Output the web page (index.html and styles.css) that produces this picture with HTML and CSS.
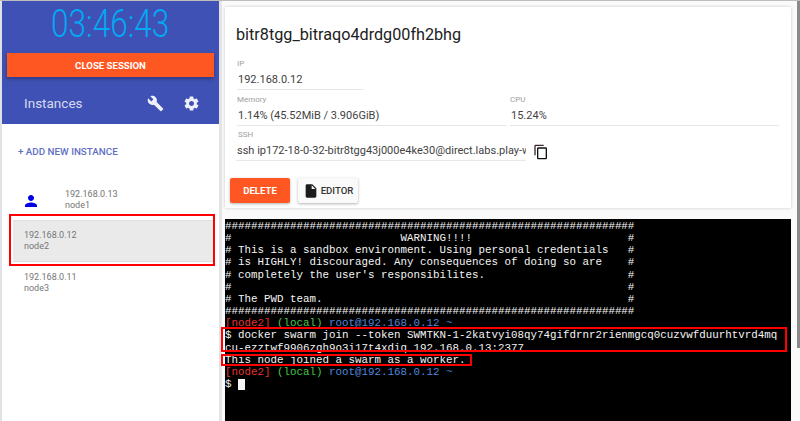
FILE: index.html
```html
<!DOCTYPE html>
<html lang="en">
<head>
<meta charset="utf-8">
<title>Play with Docker</title>
<link rel="stylesheet" href="styles.css">
</head>
<body>
<div class="page">
  <aside class="sidebar">
    <header class="side-head">
      <div class="clock"><span class="clock-text">03:46:43</span></div>
      <button class="close-btn">CLOSE SESSION</button>
      <div class="toolbar">
        <span class="toolbar-title">Instances</span>
        <svg class="tool-icon wrench" viewBox="0 0 24 24"><path d="M22.7 19l-9.1-9.1c.9-2.3.4-5-1.5-6.9-2-2-5-2.4-7.4-1.3L9 6 6 9 1.600 4.700C.4 7.100.9 10.100 2.900 12.100c1.900 1.900 4.600 2.400 6.900 1.500l9.100 9.100c.4.400 1 .4 1.400 0l2.300-2.300c.5-.4.5-1.100.1-1.400z"/></svg>
        <svg class="tool-icon gear" viewBox="0 0 24 24"><path d="M19.430 12.980c.04-.32.07-.64.07-.98s-.03-.66-.07-.98l2.110-1.650c.19-.15.24-.42.12-.64l-2-3.460c-.12-.22-.39-.3-.61-.22l-2.490 1c-.52-.4-1.080-.73-1.690-.98l-.38-2.650C14.460 2.180 14.250 2 14 2h-4c-.25 0-.46.18-.49.42l-.38 2.650c-.61.25-1.170.59-1.690.98l-2.490-1c-.23-.09-.49 0-.61.22l-2 3.460c-.13.22-.07.49.12.64l2.110 1.650c-.04.32-.07.65-.07.98s.03.66.07.98l-2.110 1.650c-.19.15-.24.42-.12.64l2 3.460c.12.22.39.3.61.22l2.490-1c.52.4 1.080.73 1.690.98l.38 2.650c.03.24.24.42.49.42h4c.25 0 .46-.18.49-.42l.38-2.650c.61-.25 1.170-.59 1.690-.98l2.490 1c.23.09.49 0 .61-.22l2-3.460c.12-.22.07-.49-.12-.64l-2.110-1.650zM12 15.500c-1.930 0-3.500-1.570-3.500-3.500s1.570-3.500 3.500-3.500 3.500 1.570 3.500 3.500-1.570 3.500-3.500 3.500z"/></svg>
      </div>
    </header>
    <div class="add-row">+ ADD NEW INSTANCE</div>
    <ul class="instances">
      <li class="instance is-manager">
        <svg class="person" viewBox="0 0 24 24"><path d="M12 12c2.210 0 4-1.790 4-4s-1.790-4-4-4-4 1.790-4 4 1.790 4 4 4zm0 2c-2.670 0-8 1.340-8 4v2h16v-2c0-2.660-5.330-4-8-4z"/></svg>
        <div class="instance-text"><div>192.168.0.13</div><div>node1</div></div>
      </li>
      <li class="instance is-selected">
        <div class="instance-text"><div>192.168.0.12</div><div>node2</div></div>
      </li>
      <li class="instance">
        <div class="instance-text"><div>192.168.0.11</div><div>node3</div></div>
      </li>
    </ul>
    <div class="mark mark-node"></div>
  </aside>
  <main class="main">
    <section class="card">
      <h1 class="title">bitr8tgg_bitraqo4drdg00fh2bhg</h1>
      <div class="field field-ip">
        <label class="label">IP</label>
        <div class="value">192.168.0.12</div>
      </div>
      <div class="stats">
        <div class="field">
          <label class="label">Memory</label>
          <div class="value">1.14% (45.52MiB / 3.906GiB)</div>
        </div>
        <div class="field">
          <label class="label">CPU</label>
          <div class="value">15.24%</div>
        </div>
      </div>
      <div class="ssh-row">
        <div class="field field-ssh">
          <label class="label">SSH</label>
          <div class="value value-clip">ssh ip172-18-0-32-bitr8tgg43j000e4ke30@direct.labs.play-with-docker.com</div>
        </div>
        <svg class="copy" viewBox="0 0 24 24"><path class="copy-back" d="M16 1H4c-1.100 0-2 .9-2 2v14h2V3h12V1z"/><path d="M19 5H8c-1.100 0-2 .9-2 2v14c0 1.100.9 2 2 2h11c1.100 0 2-.9 2-2V7c0-1.100-.9-2-2-2zm0 16H8V7h11v14z"/></svg>
      </div>
      <div class="actions">
        <button class="btn btn-delete">DELETE</button>
        <button class="btn btn-editor">
          <svg class="file" viewBox="0 0 24 24"><path d="M6 2c-1.100 0-2 .9-2 2v16c0 1.100.9 2 2 2h12c1.100 0 2-.9 2-2V8l-6-6H6zm7 7V3.500L18.500 9H13z"/></svg>
          EDITOR
        </button>
      </div>
    </section>
    <section class="terminal">
<pre class="term-text">###############################################################
#                          WARNING!!!!                        #
# This is a sandbox environment. Using personal credentials   #
# is HIGHLY! discouraged. Any consequences of doing so are    #
# completely the user's responsibilites.                      #
#                                                             #
# The PWD team.                                               #
###############################################################
<span class="t-red">[node2]</span> <span class="t-green">(local)</span> <span class="t-blue">root@192.168.0.12</span> <span class="t-blue">~</span>
$ docker swarm join --token SWMTKN-1-2katvyi08qy74gifdrnr2rienmgcq0cuzvwfduurhtvrd4mq
cu-ezztwf9906zgh9o3i17t4xdiq 192.168.0.13:2377
This node joined a swarm as a worker.
<span class="t-red">[node2]</span> <span class="t-green">(local)</span> <span class="t-blue">root@192.168.0.12</span> <span class="t-blue">~</span>
$ <span class="cursor"> </span></pre>
      <div class="mark mark-cmd"></div>
      <div class="mark mark-out"></div>
    </section>
  </main>
  <div class="scrollbar"></div>
</div>
</body>
</html>
```
FILE: styles.css
```css
* { box-sizing: border-box; }
html, body { margin: 0; height: 100%; overflow: hidden; }
body { font-family: Roboto, "Liberation Sans", sans-serif; background: #fafafa; }

.page {
  position: relative;
  width: 800px;
  height: 421px;
  display: flex;
  padding-left: 2px;
  border-top: 1px solid #bdbdbd;
  background: #dfe3e8;
  overflow: hidden;
}

/* Sidebar */
.sidebar {
  position: relative;
  width: 217px;
  flex: none;
  background: #fff;
}
.side-head {
  height: 123px;
  background: #3f51b5;
  padding: 0 5px;
}
.clock {
  height: 52px;
  display: flex;
  justify-content: center;
  padding-top: 3px;
}
.clock-text {
  font-family: Roboto, sans-serif;
  font-weight: 300;
  font-size: 38px;
  line-height: 40px;
  color: #03a9f4;
  display: inline-block;
  transform: scaleX(0.83);
}
.close-btn {
  display: block;
  width: 207px;
  height: 24px;
  border: 0;
  padding: 0;
  background: #ff5722;
  color: #fff;
  font: 700 9.600px Roboto, sans-serif;
  box-shadow: 0 2px 4px rgba(0,0,0,.3);
}
.toolbar {
  display: flex;
  align-items: center;
  height: 28px;
  margin-top: 12px;
  padding-left: 17px;
}
.toolbar-title {
  font-size: 13.500px;
  color: #d5daf0;
  width: 123px;
}
.tool-icon { fill: #eef0fa; flex: none; }
.wrench { width: 17px; height: 17px; }
.gear { width: 17px; height: 17px; margin-left: 19px; }

.add-row {
  margin: 22px 0 0 16px;
  font-size: 9.800px;
  line-height: 12px;
  font-weight: 500;
  color: #5f6fc4;
}
.instances {
  list-style: none;
  margin: 21px 0 0;
  padding: 0;
  font-size: 9px;
  line-height: 11px;
  color: #757575;
}
.instance {
  display: flex;
  align-items: center;
  height: 41px;
  margin: 0 6px 0 11px;
  padding-left: 11px;
}
.is-manager .instance-text { padding-left: 21px; }
.person { width: 18px; height: 18px; fill: #0000e6; margin: 3px 4px 0 -2px; }
.is-selected {
  background: #eaeaea;
  border-top: 1px solid #e0e0e0;
  border-bottom: 1px solid #dcdcdc;
  height: 42px;
}

/* Main */
.main {
  flex: 1;
  min-width: 0;
  background: #fafafa;
  border-left: 3px solid #e4e4e4;
  padding: 6px 6px 0 3px;
}
.card {
  height: 201px;
  width: 566px;
  background: #fff;
  box-shadow: 0 0 3px rgba(0,0,0,.2);
  padding: 0 12px 0 11px;
}
.title {
  margin: 0;
  padding-top: 17px;
  height: 52px;
  font-size: 16.200px;
  line-height: 21px;
  font-weight: 400;
  color: #212121;
}
.label {
  display: block;
  font-size: 8px;
  line-height: 10px;
  color: #9e9e9e;
}
.value {
  font-size: 11px;
  line-height: 14px;
  color: #424242;
  padding: 0 0 2px 1px;
  border-bottom: 1px solid #e8e8e8;
  margin-top: 4px;
}
.field { min-width: 0; }
.field-ip { width: 127px; margin-left: 1px; }
.stats {
  display: grid;
  grid-template-columns: 270px 269px;
  gap: 3px;
  margin: 4.500px 0 0 1px;
}
.ssh-row {
  display: flex;
  align-items: flex-end;
  margin-top: 4.500px;
}
.field-ssh { width: 290px; }
.field-ssh .label { padding-left: 2px; }
.value-clip { white-space: nowrap; overflow: hidden; }
.copy { width: 16px; height: 16px; margin: 0 0 1px 7px; fill: #111; }
.copy-back { fill: #3a2a2a; }
.actions {
  display: flex;
  gap: 8px;
  margin: 17px 0 0 -6px;
}
.btn {
  height: 25px;
  width: 60px;
  border: 0;
  border-radius: 2px;
  padding: 0;
  font: 500 9.600px Roboto, sans-serif;
  box-shadow: 0 1px 3px rgba(0,0,0,.3);
}
.btn-delete { background: #ff5722; color: #fff; font-weight: 700; }
.btn-editor {
  background: #fafafa;
  color: #333;
  display: flex;
  align-items: center;
  justify-content: center;
  gap: 2px;
}
.file { width: 16px; height: 16px; fill: #1c1c1c; }

/* Terminal */
.terminal {
  position: relative;
  width: 566px;
  height: 202px;
  margin-top: 11px;
  background: #000;
  padding: 1px 0 0;
}
.term-text {
  margin: 0;
  font-family: "Liberation Mono", monospace;
  font-size: 10.830px;
  line-height: 12.150px;
  color: #f4f4f4;
}
.t-red { color: #e6332e; }
.t-green { color: #43c843; }
.t-blue { color: #4f86dc; }
.cursor { display: inline-block; width: 7px; height: 11px; background: #f5f5f5; vertical-align: -1px; }

/* Annotation rectangles */
.mark { position: absolute; border: 2px solid #f00; pointer-events: none; }
.mark-node { left: 7px; top: 213px; width: 206px; height: 52px; }
.mark-cmd { left: -4px; top: 108px; width: 566px; height: 25px; }
.mark-out { left: -4px; top: 135px; width: 251px; height: 12px; }

.scrollbar {
  position: absolute;
  top: 0;
  right: 0;
  width: 3px;
  height: 347px;
  background: #8a8a8a;
}
```
